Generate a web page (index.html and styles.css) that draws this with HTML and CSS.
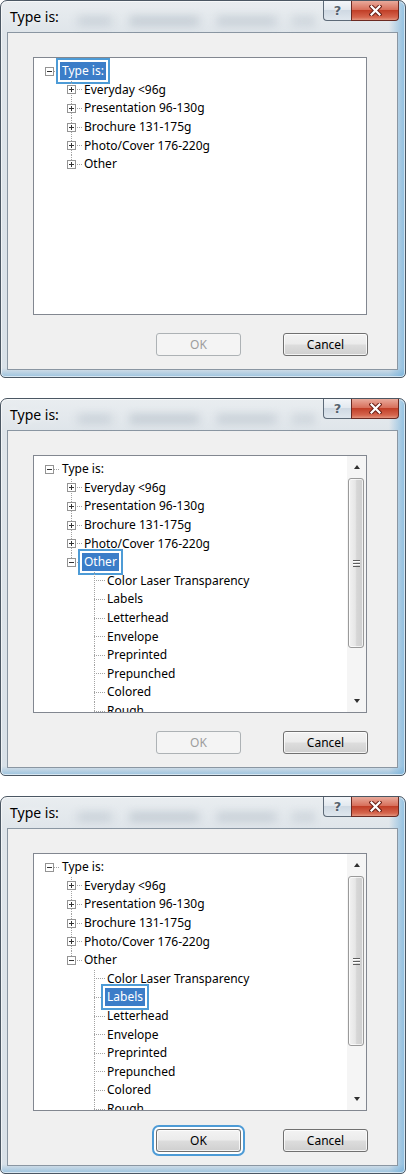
FILE: index.html
```html
<!DOCTYPE html>
<html>
<head>
<meta charset="utf-8">
<link rel="stylesheet" href="styles.css">
</head>
<body>
<div class="page">

  <!-- Dialog 1 -->
  <div class="dialog">
    <div class="titlebar">
      <span class="title">Type is:</span>
      <span class="ghost"></span>
      <div class="caption-btns">
        <span class="cbtn help">?</span>
        <span class="cbtn close"><svg width="13" height="11" viewBox="0 0 13 11"><path class="xo" d="M2.5 1.5l8 8M10.5 1.5l-8 8"/><path class="xi" d="M2.5 1.5l8 8M10.5 1.5l-8 8"/></svg></span>
      </div>
    </div>
    <div class="client">
      <div class="tree">
        <div class="tree-content">
          <div class="row l0"><span class="conn root"><svg class="exp" width="9" height="9" viewBox="0 0 9 9"><rect x=".5" y=".5" width="8" height="8"/><path d="M2 4.5h5"/></svg></span><span class="label sel">Type is:</span></div>
          <div class="row l1"><span class="conn mid"><svg class="exp" width="9" height="9" viewBox="0 0 9 9"><rect x=".5" y=".5" width="8" height="8"/><path d="M2 4.5h5M4.5 2v5"/></svg></span><span class="label">Everyday &lt;96g</span></div>
          <div class="row l1"><span class="conn mid"><svg class="exp" width="9" height="9" viewBox="0 0 9 9"><rect x=".5" y=".5" width="8" height="8"/><path d="M2 4.5h5M4.5 2v5"/></svg></span><span class="label">Presentation 96-130g</span></div>
          <div class="row l1"><span class="conn mid"><svg class="exp" width="9" height="9" viewBox="0 0 9 9"><rect x=".5" y=".5" width="8" height="8"/><path d="M2 4.5h5M4.5 2v5"/></svg></span><span class="label">Brochure 131-175g</span></div>
          <div class="row l1"><span class="conn mid"><svg class="exp" width="9" height="9" viewBox="0 0 9 9"><rect x=".5" y=".5" width="8" height="8"/><path d="M2 4.5h5M4.5 2v5"/></svg></span><span class="label">Photo/Cover 176-220g</span></div>
          <div class="row l1"><span class="conn last"><svg class="exp" width="9" height="9" viewBox="0 0 9 9"><rect x=".5" y=".5" width="8" height="8"/><path d="M2 4.5h5M4.5 2v5"/></svg></span><span class="label">Other</span></div>
        </div>
      </div>
      <div class="buttons">
        <span class="btn disabled">OK</span>
        <span class="btn">Cancel</span>
      </div>
    </div>
  </div>

  <!-- Dialog 2 -->
  <div class="dialog">
    <div class="titlebar">
      <span class="title">Type is:</span>
      <span class="ghost"></span>
      <div class="caption-btns">
        <span class="cbtn help">?</span>
        <span class="cbtn close"><svg width="13" height="11" viewBox="0 0 13 11"><path class="xo" d="M2.5 1.5l8 8M10.5 1.5l-8 8"/><path class="xi" d="M2.5 1.5l8 8M10.5 1.5l-8 8"/></svg></span>
      </div>
    </div>
    <div class="client">
      <div class="tree">
        <div class="tree-content clip">
          <div class="row l0"><span class="conn root"><svg class="exp" width="9" height="9" viewBox="0 0 9 9"><rect x=".5" y=".5" width="8" height="8"/><path d="M2 4.5h5"/></svg></span><span class="label">Type is:</span></div>
          <div class="row l1"><span class="conn mid"><svg class="exp" width="9" height="9" viewBox="0 0 9 9"><rect x=".5" y=".5" width="8" height="8"/><path d="M2 4.5h5M4.5 2v5"/></svg></span><span class="label">Everyday &lt;96g</span></div>
          <div class="row l1"><span class="conn mid"><svg class="exp" width="9" height="9" viewBox="0 0 9 9"><rect x=".5" y=".5" width="8" height="8"/><path d="M2 4.5h5M4.5 2v5"/></svg></span><span class="label">Presentation 96-130g</span></div>
          <div class="row l1"><span class="conn mid"><svg class="exp" width="9" height="9" viewBox="0 0 9 9"><rect x=".5" y=".5" width="8" height="8"/><path d="M2 4.5h5M4.5 2v5"/></svg></span><span class="label">Brochure 131-175g</span></div>
          <div class="row l1"><span class="conn mid"><svg class="exp" width="9" height="9" viewBox="0 0 9 9"><rect x=".5" y=".5" width="8" height="8"/><path d="M2 4.5h5M4.5 2v5"/></svg></span><span class="label">Photo/Cover 176-220g</span></div>
          <div class="row l1"><span class="conn last"><svg class="exp" width="9" height="9" viewBox="0 0 9 9"><rect x=".5" y=".5" width="8" height="8"/><path d="M2 4.5h5"/></svg></span><span class="label sel">Other</span></div>
          <div class="row l2"><span class="conn mid"></span><span class="label">Color Laser Transparency</span></div>
          <div class="row l2"><span class="conn mid"></span><span class="label">Labels</span></div>
          <div class="row l2"><span class="conn mid"></span><span class="label">Letterhead</span></div>
          <div class="row l2"><span class="conn mid"></span><span class="label">Envelope</span></div>
          <div class="row l2"><span class="conn mid"></span><span class="label">Preprinted</span></div>
          <div class="row l2"><span class="conn mid"></span><span class="label">Prepunched</span></div>
          <div class="row l2"><span class="conn mid"></span><span class="label">Colored</span></div>
          <div class="row l2"><span class="conn mid"></span><span class="label">Rough</span></div>
        </div>
        <div class="scrollbar">
          <span class="arrow up"></span>
          <span class="thumb"><span class="grip"></span></span>
          <span class="track"></span>
          <span class="arrow down"></span>
        </div>
      </div>
      <div class="buttons">
        <span class="btn disabled">OK</span>
        <span class="btn">Cancel</span>
      </div>
    </div>
  </div>

  <!-- Dialog 3 -->
  <div class="dialog">
    <div class="titlebar">
      <span class="title">Type is:</span>
      <span class="ghost"></span>
      <div class="caption-btns">
        <span class="cbtn help">?</span>
        <span class="cbtn close"><svg width="13" height="11" viewBox="0 0 13 11"><path class="xo" d="M2.5 1.5l8 8M10.5 1.5l-8 8"/><path class="xi" d="M2.5 1.5l8 8M10.5 1.5l-8 8"/></svg></span>
      </div>
    </div>
    <div class="client">
      <div class="tree">
        <div class="tree-content clip">
          <div class="row l0"><span class="conn root"><svg class="exp" width="9" height="9" viewBox="0 0 9 9"><rect x=".5" y=".5" width="8" height="8"/><path d="M2 4.5h5"/></svg></span><span class="label">Type is:</span></div>
          <div class="row l1"><span class="conn mid"><svg class="exp" width="9" height="9" viewBox="0 0 9 9"><rect x=".5" y=".5" width="8" height="8"/><path d="M2 4.5h5M4.5 2v5"/></svg></span><span class="label">Everyday &lt;96g</span></div>
          <div class="row l1"><span class="conn mid"><svg class="exp" width="9" height="9" viewBox="0 0 9 9"><rect x=".5" y=".5" width="8" height="8"/><path d="M2 4.5h5M4.5 2v5"/></svg></span><span class="label">Presentation 96-130g</span></div>
          <div class="row l1"><span class="conn mid"><svg class="exp" width="9" height="9" viewBox="0 0 9 9"><rect x=".5" y=".5" width="8" height="8"/><path d="M2 4.5h5M4.5 2v5"/></svg></span><span class="label">Brochure 131-175g</span></div>
          <div class="row l1"><span class="conn mid"><svg class="exp" width="9" height="9" viewBox="0 0 9 9"><rect x=".5" y=".5" width="8" height="8"/><path d="M2 4.5h5M4.5 2v5"/></svg></span><span class="label">Photo/Cover 176-220g</span></div>
          <div class="row l1"><span class="conn last"><svg class="exp" width="9" height="9" viewBox="0 0 9 9"><rect x=".5" y=".5" width="8" height="8"/><path d="M2 4.5h5"/></svg></span><span class="label">Other</span></div>
          <div class="row l2"><span class="conn mid"></span><span class="label">Color Laser Transparency</span></div>
          <div class="row l2"><span class="conn mid"></span><span class="label sel">Labels</span></div>
          <div class="row l2"><span class="conn mid"></span><span class="label">Letterhead</span></div>
          <div class="row l2"><span class="conn mid"></span><span class="label">Envelope</span></div>
          <div class="row l2"><span class="conn mid"></span><span class="label">Preprinted</span></div>
          <div class="row l2"><span class="conn mid"></span><span class="label">Prepunched</span></div>
          <div class="row l2"><span class="conn mid"></span><span class="label">Colored</span></div>
          <div class="row l2"><span class="conn mid"></span><span class="label">Rough</span></div>
        </div>
        <div class="scrollbar">
          <span class="arrow up"></span>
          <span class="thumb"><span class="grip"></span></span>
          <span class="track"></span>
          <span class="arrow down"></span>
        </div>
      </div>
      <div class="buttons">
        <span class="btn callout">OK</span>
        <span class="btn">Cancel</span>
      </div>
    </div>
  </div>

</div>
</body>
</html>
```
FILE: styles.css
```css
* { box-sizing: border-box; }
html, body { margin: 0; padding: 0; background: #fff; }
body { font-family: "Noto Sans", "Open Sans", sans-serif; color: #000; }

.page {
  width: 406px;
  display: flex;
  flex-direction: column;
  gap: 20px;
}

.dialog {
  height: 378px;
  border: 1px solid #4b5763;
  border-radius: 7px 7px 5px 5px;
  background:
    linear-gradient(0deg, rgba(105,170,215,.55) 0, rgba(105,170,215,0) 9px),
    linear-gradient(90deg, rgba(120,180,220,0) 96%, rgba(110,175,220,.7) 100%),
    linear-gradient(180deg, #e9edf0 0, #dfe5ea 32px, #d9e1e8 100%);
  box-shadow: inset 0 0 0 1px rgba(255,255,255,.6);
  display: flex;
  flex-direction: column;
  overflow: hidden;
}

.titlebar {
  height: 31px;
  display: flex;
  align-items: flex-start;
  padding-left: 9px;
  padding-right: 6px;
}
.title {
  flex: none;
  font-size: 14px;
  line-height: 18px;
  margin-top: 7px;
  white-space: nowrap;
  color: #000;
  text-shadow: 0 0 6px rgba(255,255,255,.9);
}
.ghost {
  flex: 1;
  height: 12px;
  margin: 14px 8px 0 14px;
  filter: blur(3.5px);
  opacity: .32;
  background:
    linear-gradient(90deg, transparent 0, #a7b3bf 4%, #a7b3bf 14%, transparent 18%,
      transparent 22%, #9aa7b4 25%, #9aa7b4 50%, transparent 54%,
      transparent 58%, #a3afbb 61%, #a3afbb 82%, transparent 86%,
      transparent 89%, #b2bcc6 92%, #b2bcc6 100%);
}
.caption-btns {
  flex: none;
  display: flex;
  height: 20px;
}
.cbtn {
  height: 20px;
  display: flex;
  align-items: center;
  justify-content: center;
  border: 1px solid #5d6a78;
  border-top: none;
}
.help {
  width: 28px;
  border-right: none;
  border-radius: 0 0 0 4px;
  background: linear-gradient(180deg, #f3f6f9 0, #e3e9ef 45%, #cfd9e3 50%, #dfe7ee 100%);
  font-family: "DejaVu Sans", sans-serif;
  font-weight: bold;
  font-size: 13px;
  color: #56626e;
  text-shadow: 0 0 2px #fff;
}
.close {
  width: 48px;
  border-color: #6b2a22;
  border-radius: 0 0 4px 0;
  background: linear-gradient(180deg, #e9aa9b 0, #d8715d 45%, #c13f28 50%, #d5654d 85%, #e2947f 100%);
}
.close .xo { stroke: #6a2016; stroke-width: 4.2; stroke-linecap: square; fill: none; }
.close .xi { stroke: #fff; stroke-width: 2.2; stroke-linecap: square; fill: none; }

.client {
  flex: 1;
  margin: 0 7px 7px 6px;
  background: #f0f0f0;
  border: 1px solid #8a96a2;
  padding: 24px 30px 0 25px;
  display: flex;
  flex-direction: column;
}

.tree {
  height: 258px;
  border: 1px solid #828790;
  background: #fff;
  display: flex;
}
.tree-content {
  flex: 1;
  padding-top: 4px;
  font-size: 12px;
}
.tree-content.clip { overflow: hidden; }

.row {
  height: 18.6px;
  display: flex;
  align-items: center;
  white-space: nowrap;
}
.row.l0 { padding-left: 4px; }
.row.l1 { padding-left: 26px; }
.row.l2 { padding-left: 49px; }

.conn {
  width: 22px;
  height: 100%;
  flex: none;
  display: flex;
  align-items: center;
  background-repeat: no-repeat;
}
.conn .exp { margin-left: 7px; shape-rendering: crispEdges; }
.exp rect { fill: #fff; stroke: #949494; }
.exp path { stroke: #333; fill: none; }

.conn.root {
  background-image: repeating-linear-gradient(90deg, #a3a3a3 0 1px, transparent 1px 2px);
  background-size: 6px 1px;
  background-position: 16px 50%;
}
.conn.mid {
  background-image:
    repeating-linear-gradient(90deg, #a3a3a3 0 1px, transparent 1px 2px),
    repeating-linear-gradient(180deg, #a3a3a3 0 1px, transparent 1px 2px);
  background-size: 11px 1px, 1px 100%;
  background-position: 11px 50%, 11px 0;
}
.conn.last {
  background-image:
    repeating-linear-gradient(90deg, #a3a3a3 0 1px, transparent 1px 2px),
    repeating-linear-gradient(180deg, #a3a3a3 0 1px, transparent 1px 2px);
  background-size: 11px 1px, 1px 50%;
  background-position: 11px 50%, 11px 0;
}

.label {
  padding: 1px 2px;
  line-height: 16px;
}
.label.sel {
  background: #3b7dc8;
  color: #fff;
  box-shadow: 0 0 0 2px #fff, 0 0 0 4px #4d9bd6;
}

.scrollbar {
  width: 19px;
  flex: none;
  background: #f5f5f5;
  display: flex;
  flex-direction: column;
  align-items: center;
}
.arrow {
  height: 22px;
  width: 100%;
  display: flex;
  align-items: center;
  justify-content: center;
  flex: none;
}
.arrow::after {
  content: "";
  border-left: 3.5px solid transparent;
  border-right: 3.5px solid transparent;
}
.arrow.up::after { border-bottom: 4px solid #303030; }
.arrow.down::after { border-top: 4px solid #303030; }
.thumb {
  width: 16px;
  height: 170px;
  flex: none;
  margin-left: -1px;
  border: 1px solid #9a9a9a;
  border-radius: 3px;
  background: linear-gradient(90deg, #f2f2f2 0, #e6e6e6 45%, #d6d6d6 55%, #cfcfcf 100%);
  box-shadow: inset 0 0 0 1px rgba(255,255,255,.7);
  display: flex;
  align-items: center;
  justify-content: center;
}
.grip {
  width: 7px;
  height: 7px;
  background: repeating-linear-gradient(180deg, #5e5e5e 0 1px, #fff 1px 2px, transparent 2px 3px);
}
.track { flex: 1; }

.buttons {
  margin-top: 18px;
  margin-right: -1px;
  display: flex;
  justify-content: flex-end;
  gap: 42px;
}
.btn {
  width: 85px;
  height: 23px;
  border: 1px solid #707070;
  border-radius: 3px;
  background: linear-gradient(180deg, #f3f3f3 0, #ebebeb 48%, #dddddd 52%, #cfcfcf 100%);
  box-shadow: inset 0 0 0 1px rgba(255,255,255,.75);
  font-size: 12px;
  display: flex;
  align-items: center;
  justify-content: center;
  color: #000;
}
.btn.disabled {
  border-color: #adb2b5;
  background: #f4f4f4;
  box-shadow: none;
  color: #9d9d9d;
}
.btn.callout {
  box-shadow: inset 0 0 0 1px rgba(255,255,255,.75), 0 0 0 2px #fff, 0 0 0 4px #4d9bd6;
}
```
